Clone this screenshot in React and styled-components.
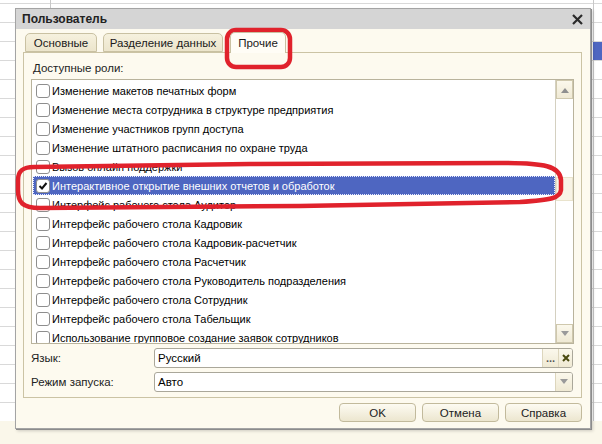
import styled, { createGlobalStyle } from "styled-components";

const GlobalStyle = createGlobalStyle`
  html, body {
    margin: 0;
    padding: 0;
  }
  body {
    font-family: 'Liberation Sans', Arial, sans-serif;
    font-size: 11px;
    color: #000;
  }
`;

const Page = styled.div`
  position: relative;
  width: 602px;
  height: 444px;
  overflow: hidden;
  box-sizing: border-box;
  padding: 8px 11px 0 15px;
  background:
    linear-gradient(to bottom, transparent 421px, #faf7ea 421px),
    linear-gradient(#4e66c1, #4e66c1) 593px 42px / 9px 18px no-repeat,
    linear-gradient(#c8c8c8, #c8c8c8) 50px 0 / 1px 100% no-repeat,
    linear-gradient(#c8c8c8, #c8c8c8) 593px 0 / 1px 100% no-repeat,
    repeating-linear-gradient(to bottom, transparent 0 3px, #d9d9d9 3px 4px, transparent 4px 19px),
    #ffffff;
`;

const Dialog = styled.div`
  width: 576px;
  height: 421px;
  box-sizing: border-box;
  border: 1px solid #a4a4a4;
  box-shadow: 1px 1px 0 #8c8c8c, 2px 2px 3px rgba(0, 0, 0, 0.18);
  display: flex;
  flex-direction: column;
  background: #fdfaef;
`;

const TitleBar = styled.div`
  height: 20px;
  flex: none;
  background: #d5d5d5;
  display: flex;
  align-items: center;
  justify-content: space-between;
  padding: 0 7px 0 6px;
`;

const Title = styled.span`
  font-weight: bold;
  font-size: 12px;
  color: #222;
`;

const CloseButton = styled.span`
  display: flex;
  align-items: center;
`;

const Body = styled.div`
  flex: 1;
  display: flex;
  flex-direction: column;
  padding: 4px 8px 8px 7px;
`;

const TabRow = styled.div`
  display: flex;
  align-items: flex-end;
  gap: 6px;
  padding-left: 2px;
  height: 19px;
  position: relative;
  z-index: 1;
`;

const Tab = styled.div`
  box-sizing: border-box;
  width: ${p => p.w}px;
  height: ${p => (p.active ? 21 : 19)}px;
  margin-bottom: ${p => (p.active ? -1 : 0)}px;
  margin-left: ${p => (p.active ? 1 : 0)}px;
  border: 1px solid #c9c1a2;
  border-bottom: ${p => (p.active ? "none" : "1px solid #c9c1a2")};
  border-radius: 5px 5px 0 0;
  background: ${p =>
    p.active ? "#fffdf6" : "linear-gradient(to bottom, #f6f1de, #ece5cc)"};
  display: flex;
  align-items: center;
  justify-content: center;
  font-size: 11.5px;
  color: #1a1a1a;
  padding-top: ${p => (p.active ? 0 : 1)}px;
`;

const Panel = styled.div`
  flex: none;
  height: 346px;
  box-sizing: border-box;
  border: 1px solid #cbc3a4;
  padding: 6px 7px 0 7px;
  display: flex;
  flex-direction: column;
`;

const Caption = styled.div`
  margin-left: 2px;
  height: 20px;
  line-height: 18px;
  font-size: 11.5px;
  color: #222;
`;

const ListBox = styled.div`
  height: 265px;
  box-sizing: border-box;
  border: 1px solid #b9b39c;
  background: #fff;
  display: flex;
  overflow: hidden;
`;

const Rows = styled.div`
  flex: 1;
  padding: 1px 0 0 1px;
  overflow: hidden;
`;

const Row = styled.div`
  height: 19px;
  box-sizing: border-box;
  display: flex;
  align-items: center;
  padding-left: 3px;
  white-space: nowrap;
  font-size: 11px;
  background: ${p => (p.selected ? "#4e66c1" : "transparent")};
  color: ${p => (p.selected ? "#fff" : "#000")};
  outline: ${p => (p.selected ? "1px dotted #e8ecff" : "none")};
  outline-offset: -1px;
`;

const Check = styled.span`
  flex: none;
  width: 12px;
  height: 12px;
  margin-right: 2px;
  border: 1px solid #8e8e8e;
  border-radius: 3px;
  background: #fff;
  display: flex;
  align-items: center;
  justify-content: center;
`;

const ScrollBar = styled.div`
  width: 17px;
  flex: none;
  border-left: 1px solid #d4d0c0;
  display: flex;
  flex-direction: column;
  background: #fff;
`;

const ScrollArrow = styled.div`
  height: 19px;
  box-sizing: border-box;
  border: 1px solid #cfc8ad;
  background: linear-gradient(to bottom, #fbf8ec, #efe9d4);
  display: flex;
  align-items: center;
  justify-content: center;
`;

const ScrollTrack = styled.div`
  flex: 1;
  display: flex;
  flex-direction: column;
  padding-top: 78px;
`;

const ScrollThumb = styled.div`
  height: 22px;
  border: 1px solid #e9e3cc;
  background: #f8f4e6;
`;

const Field = styled.div`
  display: flex;
  align-items: center;
  margin-top: ${p => p.top}px;
`;

const FieldLabel = styled.div`
  width: 123px;
  padding-left: 0;
  font-size: 11.5px;
  color: #222;
`;

const InputBox = styled.div`
  flex: 1;
  height: 20px;
  box-sizing: border-box;
  border: 1px solid #aaa79a;
  border-radius: 3px;
  background: #fff;
  display: flex;
  align-items: stretch;
  overflow: hidden;
  margin-right: 1px;
`;

const InputText = styled.div`
  flex: 1;
  display: flex;
  align-items: center;
  padding-left: 3px;
  font-size: 11.5px;
`;

const InputButton = styled.div`
  width: ${p => p.w}px;
  flex: none;
  display: flex;
  align-items: center;
  justify-content: center;
  border-left: 1px solid #ddd6bd;
  background: linear-gradient(to bottom, #fbf8ec, #efe9d3);
  font-weight: bold;
  color: #555;
`;

const Footer = styled.div`
  display: flex;
  justify-content: flex-end;
  gap: 6px;
  margin-top: 5px;
`;

const Button = styled.div`
  width: 77px;
  height: 19px;
  box-sizing: border-box;
  border: 1px solid #c2ba9c;
  border-radius: 4px;
  background: linear-gradient(to bottom, #fdfbf2, #ece6cf);
  display: flex;
  align-items: center;
  justify-content: center;
  font-size: 11.5px;
  color: #222;
`;

const Marker = styled.svg`
  position: absolute;
  left: 0;
  top: 0;
  pointer-events: none;
`;

const roles = [
  "Изменение макетов печатных форм",
  "Изменение места сотрудника в структуре предприятия",
  "Изменение участников групп доступа",
  "Изменение штатного расписания по охране труда",
  "Вызов онлайн поддержки",
  "Интерактивное открытие внешних отчетов и обработок",
  "Интерфейс рабочего стола Аудитор",
  "Интерфейс рабочего стола Кадровик",
  "Интерфейс рабочего стола Кадровик-расчетчик",
  "Интерфейс рабочего стола Расчетчик",
  "Интерфейс рабочего стола Руководитель подразделения",
  "Интерфейс рабочего стола Сотрудник",
  "Интерфейс рабочего стола Табельщик",
  "Использование групповое создание заявок сотрудников",
];

const Tick = () => (
  <svg width="10" height="10" viewBox="0 0 10 10">
    <path d="M1.5 5 L4 7.5 L8.5 2" fill="none" stroke="#111" strokeWidth="2" />
  </svg>
);

const Triangle = ({ up }) => (
  <svg width="8" height="6" viewBox="0 0 8 6">
    <path d={up ? "M0 6 L4 1 L8 6 Z" : "M0 0 L8 0 L4 5 Z"} fill={up ? "#8f8f8f" : "#9a9a9a"} />
  </svg>
);

export default function App() {
  return (
    <>
      <GlobalStyle />
      <Page>
        <Dialog>
          <TitleBar>
            <Title>Пользователь</Title>
            <CloseButton>
              <svg width="11" height="11" viewBox="0 0 11 11">
                <path d="M1 1 L10 10 M10 1 L1 10" stroke="#2b2b2b" strokeWidth="2.2" />
              </svg>
            </CloseButton>
          </TitleBar>
          <Body>
            <TabRow>
              <Tab w={72}>Основные</Tab>
              <Tab w={120}>Разделение данных</Tab>
              <Tab w={56} active>Прочие</Tab>
            </TabRow>
            <Panel>
              <Caption>Доступные роли:</Caption>
              <ListBox>
                <Rows>
                  {roles.map((r, i) => (
                    <Row key={r} selected={i === 5}>
                      <Check>{i === 5 && <Tick />}</Check>
                      {r}
                    </Row>
                  ))}
                </Rows>
                <ScrollBar>
                  <ScrollArrow><Triangle up /></ScrollArrow>
                  <ScrollTrack>
                    <ScrollThumb />
                  </ScrollTrack>
                  <ScrollArrow><Triangle /></ScrollArrow>
                </ScrollBar>
              </ListBox>
              <Field top={4}>
                <FieldLabel>Язык:</FieldLabel>
                <InputBox>
                  <InputText>Русский</InputText>
                  <InputButton w={15}>...</InputButton>
                  <InputButton w={13}>
                    <svg width="8" height="8" viewBox="0 0 8 8">
                      <path d="M1 1 L7 7 M7 1 L1 7" stroke="#4a4a10" strokeWidth="2" />
                    </svg>
                  </InputButton>
                </InputBox>
              </Field>
              <Field top={4}>
                <FieldLabel>Режим запуска:</FieldLabel>
                <InputBox>
                  <InputText>Авто</InputText>
                  <InputButton w={16}><Triangle /></InputButton>
                </InputBox>
              </Field>
            </Panel>
            <Footer>
              <Button>OK</Button>
              <Button>Отмена</Button>
              <Button>Справка</Button>
            </Footer>
          </Body>
        </Dialog>
        <Marker width="602" height="444" viewBox="0 0 602 444">
          <rect x="227" y="30" width="63" height="37" rx="9" fill="none" stroke="#e0222c" strokeWidth="4.5" />
          <path
            d="M34 167 L250 164 L500 163 C545 163 560 166 561 180 L561 190 C560 198 552 200 520 202 L300 206 L40 208 C22 208 18 202 18 190 L18 180 C18 170 24 167 34 167 Z"
            fill="none"
            stroke="#e0222c"
            strokeWidth="4.5"
          />
        </Marker>
      </Page>
    </>
  );
}
